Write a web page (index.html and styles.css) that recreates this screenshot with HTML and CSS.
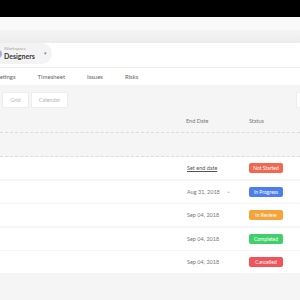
FILE: index.html
```html
<!DOCTYPE html>
<html lang="en">
<head>
    <meta charset="UTF-8">
    <meta name="viewport" content="width=device-width, initial-scale=1.0">
    <title>Designers - Tasks</title>
    <link rel="stylesheet" href="styles.css">
</head>
<body>
    <div class="topbar"></div>
    <div class="toolbar-strip"></div>
    <div class="toolbar-strip dark"></div>

    <div class="header">
        <div class="workspace">
            <span class="avatar"></span>
            <div class="workspace-text">
                <span class="workspace-label">Workspace</span>
                <span class="workspace-name">Designers</span>
            </div>
            <span class="caret">&#9662;</span>
        </div>
    </div>

    <div class="tabs">
        <span class="tab first">Meetings</span>
        <span class="tab">Timesheet</span>
        <span class="tab">Issues</span>
        <span class="tab">Risks</span>
    </div>

    <div class="main">
        <div class="view-bar">
            <div class="view-buttons">
                <button class="view-btn grid">Grid</button>
                <button class="view-btn">Calendar</button>
            </div>
            <button class="view-btn edge"></button>
        </div>

        <div class="table-head">
            <span class="spacer"></span>
            <span class="col-date">End Date</span>
            <span class="col-status">Status</span>
        </div>
        <div class="group-row"></div>

        <div class="task-row">
            <span class="spacer"></span>
            <span class="col-date"><a class="set-date">Set end date</a></span>
            <span class="col-status"><span class="badge not-started">Not Started</span></span>
        </div>
        <div class="task-row">
            <span class="spacer"></span>
            <span class="col-date">Aug 31, 2018 <span class="chevron">&#8964;</span></span>
            <span class="col-status"><span class="badge in-progress">In Progress</span></span>
        </div>
        <div class="task-row">
            <span class="spacer"></span>
            <span class="col-date">Sep 04, 2018</span>
            <span class="col-status"><span class="badge in-review">In Review</span></span>
        </div>
        <div class="task-row">
            <span class="spacer"></span>
            <span class="col-date">Sep 04, 2018</span>
            <span class="col-status"><span class="badge completed">Completed</span></span>
        </div>
        <div class="task-row">
            <span class="spacer"></span>
            <span class="col-date">Sep 04, 2018</span>
            <span class="col-status"><span class="badge cancelled">Cancelled</span></span>
        </div>
    </div>
</body>
</html>
```

FILE: styles.css
```css
body {
    font-family: Lato, "Liberation Sans", sans-serif;
    margin: 0;
    width: 300px;
    height: 300px;
    overflow: hidden;
    background-color: #f5f5f5;
}
.topbar {
    height: 17px;
    background: #000;
}
.toolbar-strip {
    height: 13px;
    background: #f9f9f9;
}
.toolbar-strip.dark {
    background: linear-gradient(#f4f4f4, #ececec);
}
.header {
    height: 24px;
    background: white;
    border-bottom: 1px solid #ececec;
}
.workspace {
    width: 52px;
    height: 21px;
    background: #f3f3f3;
    border-radius: 0 11px 11px 0;
    display: flex;
    align-items: center;
    overflow: hidden;
}
.avatar {
    width: 8px;
    height: 8px;
    margin-left: -6px;
    border-radius: 50%;
    background: #9fb0dc;
}
.workspace-text {
    display: flex;
    flex-direction: column;
    margin-left: 2px;
    line-height: 1;
}
.workspace-label {
    font-size: 4.5px;
    color: #a5a5a5;
    margin-bottom: 2px;
}
.workspace-name {
    font-size: 7px;
    font-weight: bold;
    color: #3a3a3a;
}
.caret {
    font-size: 5px;
    color: #888;
    margin-left: 9px;
    margin-top: -2px;
}
.tabs {
    height: 17px;
    background: white;
    display: flex;
    align-items: center;
    gap: 22px;
    font-size: 6px;
    color: #666;
    overflow: hidden;
}
.tab.first {
    margin-left: -9px;
}
.main {
    padding-top: 7px;
}
.view-bar {
    display: flex;
    justify-content: space-between;
    padding-left: 2px;
}
.view-buttons {
    display: flex;
    gap: 2px;
}
.view-btn {
    width: 37px;
    height: 16px;
    padding: 0;
    background: white;
    border: 1px solid #ededed;
    border-radius: 2px;
    font-family: inherit;
    font-size: 5.5px;
    color: #b5b5b5;
}
.view-btn.grid {
    width: 27px;
}
.view-btn.edge {
    width: 30px;
    margin-right: -26px;
}
.table-head, .task-row {
    display: flex;
    align-items: center;
}
.table-head {
    height: 23px;
    border-bottom: 1px dashed #dcdcdc;
    font-size: 5.5px;
    color: #777;
    padding-top: 1px;
}
.group-row {
    height: 23px;
    border-bottom: 1px dashed #dcdcdc;
}
.spacer {
    flex: 1;
}
.col-date {
    width: 63px;
    padding-left: 1px;
    box-sizing: border-box;
}
.table-head .col-date {
    padding-left: 0;
}
.col-status {
    width: 51px;
}
.task-row {
    height: 22px;
    background: white;
    margin-bottom: 1.5px;
    font-size: 5.5px;
    color: #777;
}
.set-date {
    color: #555;
    text-decoration: underline;
}
.chevron {
    margin-left: 5px;
    color: #aaa;
    position: relative;
    top: -1px;
}
.badge {
    display: inline-block;
    width: 34px;
    height: 10px;
    line-height: 10px;
    border-radius: 2px;
    text-align: center;
    color: white;
    font-size: 5px;
}
.not-started {
    background: #f1674f;
}
.in-progress {
    background: #4c7ef0;
}
.in-review {
    background: #f5a43a;
}
.completed {
    background: #3fcf6b;
}
.cancelled {
    background: #f1535b;
}
```
